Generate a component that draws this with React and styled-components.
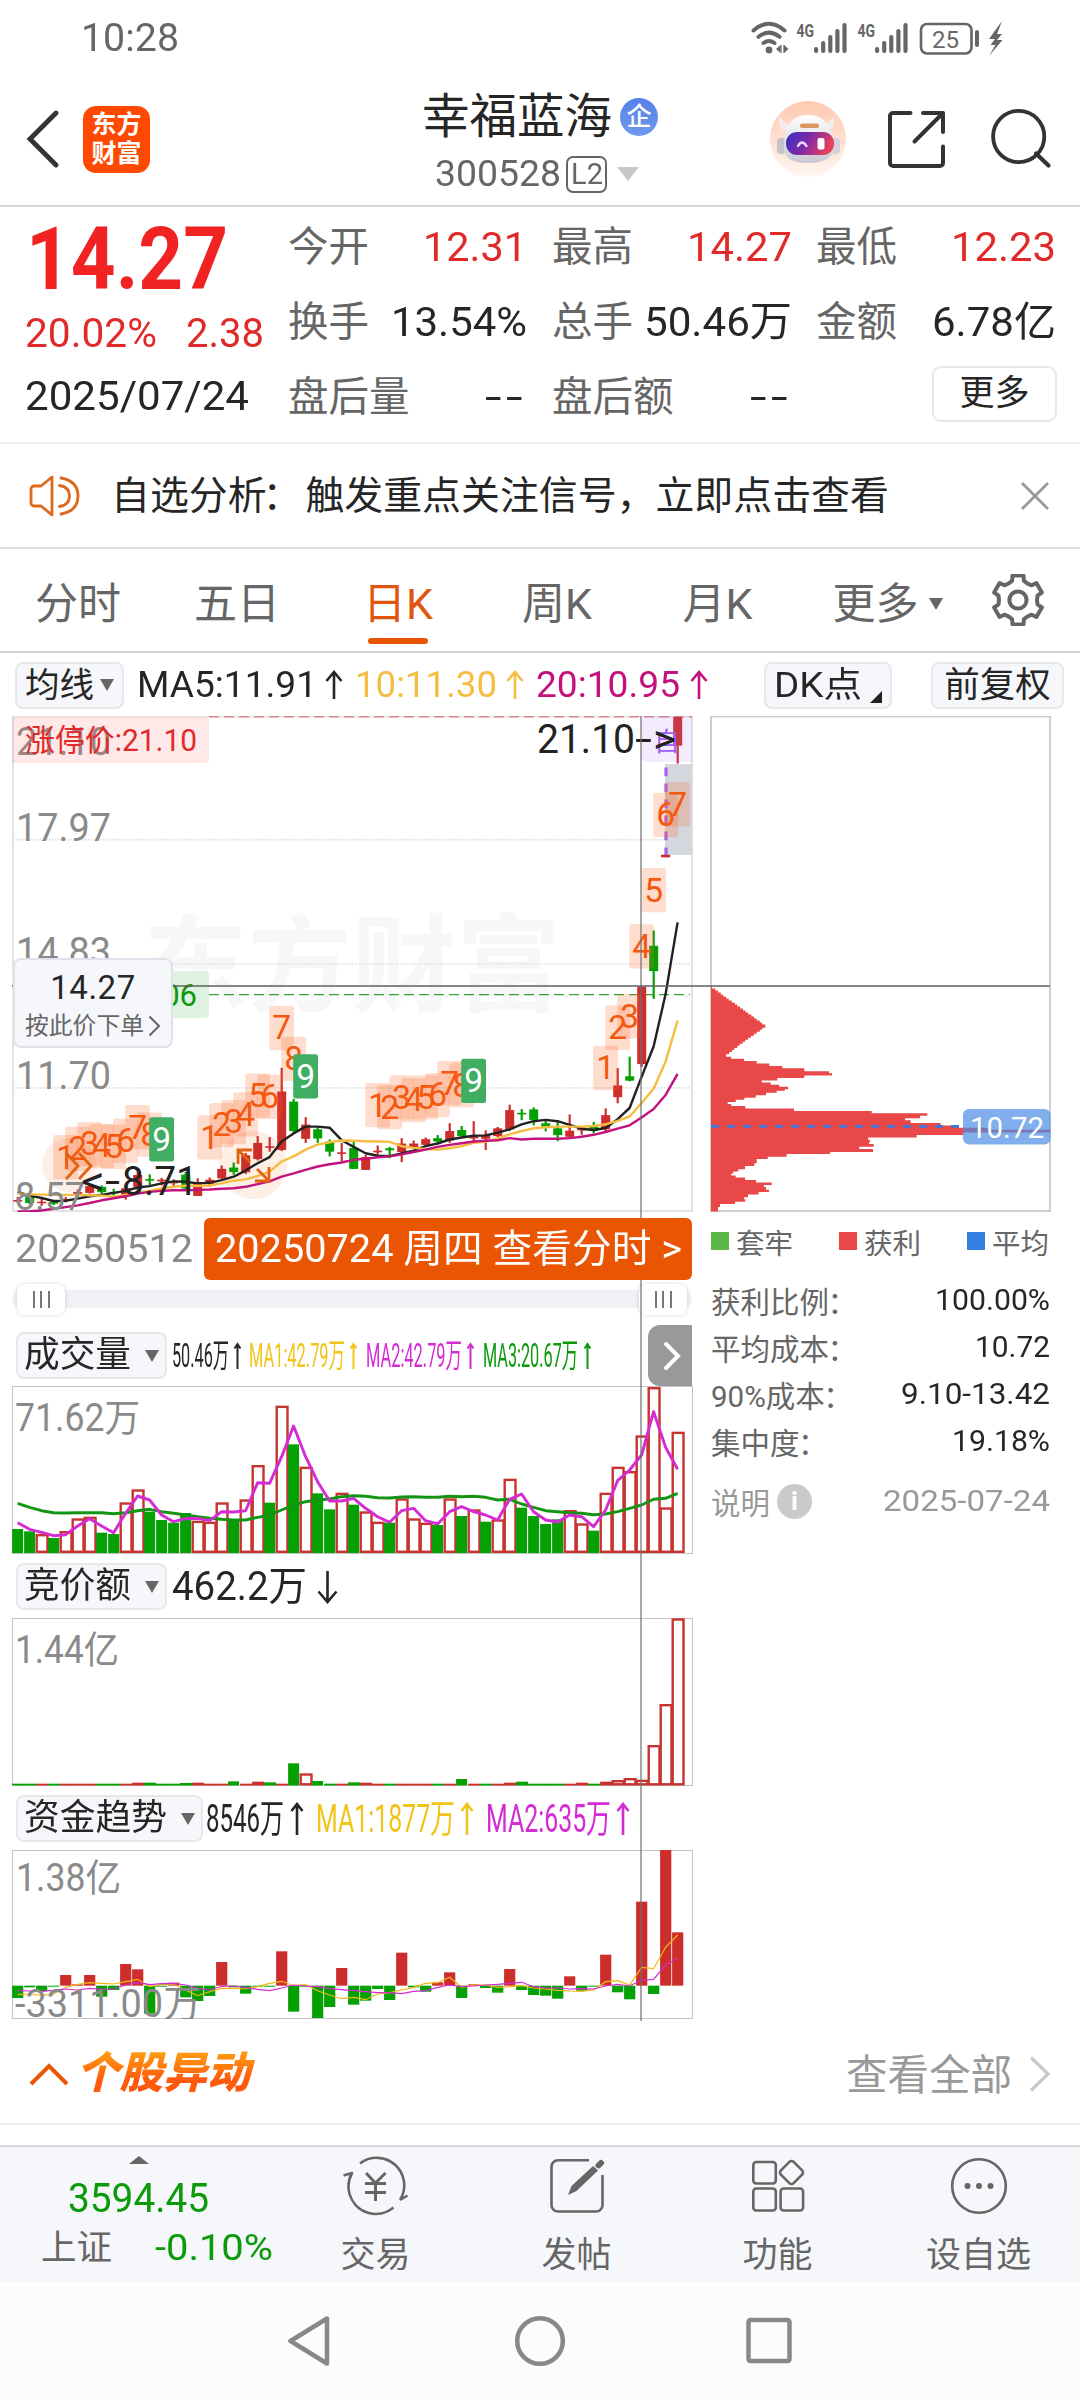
import React, { useLayoutEffect, useRef, useState } from 'react';
import styled, { createGlobalStyle } from 'styled-components';

const FONT = 'Roboto, "Noto Sans CJK SC", sans-serif';

const C = {
  ink: '#262626',
  grey: '#666666',
  light: '#999999',
  red: '#e02a2a',
  green: '#0a9a0a',
  orange: '#ea5504',
  yellow: '#f5bd42',
  gold: '#f0c419',
  magenta: '#c4127d',
  violet: '#d42bd4',
  up: '#cd2e2c',
  down: '#04a004',
};

const Global = createGlobalStyle`
  * { box-sizing: border-box; }
  body { margin: 0; background: #fff; font-family: ${FONT}; color: ${C.ink}; }
  svg { display: block; flex: none; }
  text { font-family: ${FONT}; }
`;

/* ---------- shared pieces ---------- */

const FitBox = styled.span`
  display: inline-block;
  flex: none;
  width: ${(p) => p.$w}px;
  white-space: nowrap;
`;
const FitInner = styled.span`
  display: inline-block;
  transform-origin: left center;
`;

function Fit({ w, children }) {
  const ref = useRef(null);
  const [scale, setScale] = useState(1);
  useLayoutEffect(() => {
    const natural = ref.current.getBoundingClientRect().width / scale;
    if (natural) setScale(w / natural);
  }, [w, children]);
  return (
    <FitBox $w={w}>
      <FitInner ref={ref} style={{ transform: `scaleX(${scale})` }}>{children}</FitInner>
    </FitBox>
  );
}

const Page = styled.div`
  width: 1080px;
  height: 2400px;
  display: flex;
  flex-direction: column;
  overflow: hidden;
  background: #fff;
`;

const Label = styled.span`
  display: inline-block;
  flex: none;
  font-size: ${(p) => p.$size || 36}px;
  font-weight: ${(p) => p.$weight || 400};
  color: ${(p) => p.$color || C.ink};
  line-height: ${(p) => p.$lh || 50}px;
  margin-left: ${(p) => p.$ml || 0}px;
  white-space: nowrap;
`;

const Caret = styled.i`
  display: inline-block;
  flex: none;
  border: ${(p) => (p.$w || 14) / 2}px solid transparent;
  border-bottom-width: 0;
  border-top: ${(p) => p.$h || 12}px solid ${(p) => p.$color || C.grey};
  margin-left: ${(p) => p.$ml || 0}px;
`;

const Colon = styled.span`
  margin: 0 ${(p) => p.$by}px 0 ${(p) => -p.$by}px;
`;

const ArrowSvg = styled.svg`
  margin-left: ${(p) => p.$ml}px;
`;
function Arrow({ color, w = 18, h = 30, ml = 6, down }) {
  const d = down
    ? `M${w / 2} 1V${h - 2}M1.5 ${h - w / 2 - 2}L${w / 2} ${h - 2}L${w - 1.5} ${h - w / 2 - 2}`
    : `M${w / 2} ${h - 1}V2M1.5 ${w / 2 + 2}L${w / 2} 2L${w - 1.5} ${w / 2 + 2}`;
  return (
    <ArrowSvg width={w} height={h} $ml={ml} viewBox={`0 0 ${w} ${h}`}>
      <path d={d} fill="none" stroke={color} strokeWidth={w < 12 ? 2 : 2.6} />
    </ArrowSvg>
  );
}

/* ---------- status bar ---------- */

const StatusBar = styled.div`
  height: 72px;
  flex: none;
  display: flex;
  align-items: center;
  justify-content: space-between;
  padding: 4px 76px 0 81px;
`;

function StatusIcons() {
  const bars = (x) =>
    [0, 1, 2, 3, 4].map((i) => (
      <rect key={i} x={x + i * 7.1} y={27 - i * 6} width="4.2" height={6 + i * 6} rx="2" fill={C.grey} />
    ));
  return (
    <svg width="254" height="36" viewBox="750 18 254 36">
      <g fill="none" stroke={C.grey} strokeWidth="4" strokeLinecap="round">
        <path d="M753.500 28.500Q769 15 784.500 28.500" />
        <path d="M758.500 34.800Q769 26.500 779.500 34.800" />
        <path d="M763.500 41Q769 37 774.500 41" />
      </g>
      <circle cx="769" cy="48" r="3.400" fill={C.grey} />
      <path d="M776 47l4.500-4v8zM788.500 47l-4.500-4v8z" fill={C.grey} />
      <path d="M781 43v8M784 43v8" stroke={C.grey} strokeWidth="1.200" />
      <text x="796.500" y="34.500" fontSize="19" fontWeight="700" fill={C.grey} textLength="17.500" lengthAdjust="spacingAndGlyphs">4G</text>
      <g transform="translate(0 18)">{bars(814)}</g>
      <text x="857.500" y="34.500" fontSize="19" fontWeight="700" fill={C.grey} textLength="17.500" lengthAdjust="spacingAndGlyphs">4G</text>
      <g transform="translate(0 18)">{bars(875)}</g>
      <rect x="921" y="22" width="50.500" height="29.500" rx="6" fill="none" stroke={C.grey} strokeWidth="2.600" />
      <text x="945.500" y="45.500" fontSize="24" textAnchor="middle" fill={C.grey}>25</text>
      <rect x="975" y="28" width="4" height="17" rx="2" fill={C.grey} />
      <path d="M1002 19L989 37h6l-4.500 6h5L989 54l13.500-16h-5.500l5-6h-5z" fill={C.grey} />
    </svg>
  );
}

/* ---------- title bar ---------- */

const TitleBar = styled.header`
  height: 135px;
  flex: none;
  display: grid;
  grid-template-columns: 360px 360px 360px;
  border-bottom: 2px solid #d8d8d8;
`;
const TitleLeft = styled.div`
  display: flex;
  align-items: center;
  padding: 1px 0 0 26px;
`;
const Logo = styled.div`
  width: 67px;
  height: 67px;
  margin-left: 23px;
  border-radius: 13px;
  background: #ff4800;
  color: #fff;
  display: flex;
  flex-direction: column;
  align-items: center;
  justify-content: center;
  font-size: 25px;
  font-weight: 700;
  line-height: 29px;
`;
const TitleMid = styled.div`
  display: flex;
  flex-direction: column;
  padding-top: 13px;
`;
const NameRow = styled.div`
  height: 64px;
  display: flex;
  align-items: center;
  padding-left: 62px;
`;
const CodeRow = styled.div`
  height: 50px;
  display: flex;
  align-items: center;
  padding-left: 75px;
`;
const CorpBadge = styled.span`
  width: 38px;
  height: 38px;
  margin-left: 8px;
  border-radius: 50%;
  background: linear-gradient(#5680ea, #6e9bec);
  color: #fff;
  font-size: 25px;
  font-weight: 500;
  line-height: 38px;
  text-align: center;
`;
const LevelBadge = styled.span`
  width: 41px;
  height: 37px;
  margin-left: 5px;
  border: 2px solid ${C.grey};
  border-radius: 7px;
  font-size: 29px;
  line-height: 33px;
  color: ${C.grey};
  display: flex;
  justify-content: center;
`;
const TitleRight = styled.div`
  display: flex;
  align-items: center;
  padding: 1px 0 0 50px;
`;

function Robot() {
  return (
    <svg width="76" height="76" viewBox="0 0 76 76">
      <defs>
        <linearGradient id="halo" x1="0" y1="0" x2="0" y2="1">
          <stop offset="0" stopColor="#ffc9b0" />
          <stop offset="1" stopColor="#fff6f1" />
        </linearGradient>
        <linearGradient id="visor" x1="0" y1="0" x2="1" y2="0.300">
          <stop offset="0" stopColor="#3a2fc0" />
          <stop offset="0.500" stopColor="#7a2aa8" />
          <stop offset="1" stopColor="#e5405c" />
        </linearGradient>
        <linearGradient id="shell" x1="0" y1="0" x2="0" y2="1">
          <stop offset="0" stopColor="#ffffff" />
          <stop offset="1" stopColor="#c9c9d2" />
        </linearGradient>
      </defs>
      <circle cx="38" cy="38" r="38" fill="url(#halo)" />
      <path d="M10 15q-4 10 6 16l4-7q-8-2-10-9zM63 15q4 10-6 16l-4-7q8-2 10-9z" fill="#f3eeee" />
      <rect x="7" y="37" width="9" height="16" rx="4" fill="#c4c2cb" />
      <rect x="61" y="37" width="9" height="16" rx="4" fill="#d2d0d8" />
      <path d="M14 45Q14 14 38 14T64 45Q64 62 38 62T14 45z" fill="url(#shell)" />
      <rect x="30" y="22.500" width="19" height="4.500" rx="2" fill="#dc9460" />
      <rect x="16" y="31" width="48" height="23" rx="11" fill="url(#visor)" />
      <path d="M28 45q4-7 8.500 0" fill="none" stroke="#e9d6ff" strokeWidth="2.400" strokeLinecap="round" />
      <rect x="47.500" y="37" width="7" height="11.500" rx="2" fill="#fff" />
    </svg>
  );
}
const Gap = styled.span`
  flex: none;
  width: ${(p) => p.$w}px;
`;

/* ---------- quote ---------- */

const Quote = styled.section`
  height: 237px;
  flex: none;
  display: grid;
  grid-template-columns: 263px 236px 237px 238px;
  column-gap: 0;
  padding: 3px 0 0 25px;
  border-bottom: 2px solid #ececec;
`;
const PriceCol = styled.div`
  display: flex;
  flex-direction: column;
`;
const Price = styled.div`
  height: 99px;
  padding-left: 1px;
  font-size: 87px;
  font-weight: 700;
  line-height: 99px;
  color: #f02222;
`;
const ChangeRow = styled.div`
  height: 49px;
  display: flex;
  align-items: center;
  gap: 29px;
  font-size: 41px;
  line-height: 49px;
  color: ${C.red};
`;
const DateRow = styled.div`
  height: 76px;
  font-size: 41px;
  line-height: 76px;
`;
const MetricCol = styled.div`
  display: flex;
  flex-direction: column;
  width: ${(p) => p.$w}px;
  margin-left: ${(p) => p.$ml || 0}px;
`;
const Metric = styled.div`
  height: 75px;
  display: flex;
  align-items: center;
  justify-content: space-between;
  font-size: 41px;
  line-height: 75px;
  color: ${(p) => (p.$red ? C.red : C.ink)};
`;
const MetricName = styled.span`
  font-size: 40.5px;
  color: ${C.grey};
`;
const Dashes = styled.span`
  letter-spacing: 3px;
`;
const MoreBtn = styled.div`
  width: 125px;
  height: 56px;
  margin: 6px 0 0 116px;
  border: 2px solid #e8e8ea;
  border-radius: 9px;
  font-size: 35px;
  line-height: 52px;
  text-align: center;
`;

/* ---------- notice ---------- */

const Notice = styled.section`
  height: 105px;
  flex: none;
  display: flex;
  align-items: center;
  padding: 0 30px 0 28px;
  border-bottom: 2px solid #dcdcdc;
`;
const NoticeText = styled.span`
  flex: 1;
  margin-left: 29px;
  padding-top: 1px;
  font-size: 38.9px;
  line-height: 60px;
  white-space: nowrap;
`;

/* ---------- tabs ---------- */

const Tabs = styled.nav`
  height: 104px;
  flex: none;
  display: flex;
  border-bottom: 2px solid #d4d4d4;
`;
const Tab = styled.div`
  width: ${(p) => p.$w}px;
  display: flex;
  flex-direction: column;
  align-items: center;
  padding-top: 25px;
  font-size: 43px;
  line-height: 60px;
  color: ${(p) => (p.$on ? '#e0560f' : C.grey)};
`;
const TabBar = styled.i`
  width: 60px;
  height: 6px;
  margin-top: 4px;
  border-radius: 3px;
  background: ${C.orange};
`;
const TabMore = styled.div`
  display: flex;
  align-items: center;
`;

function Gear() {
  const pts = [];
  for (let i = 0; i < 6; i += 1) {
    const base = (i * 60 - 90) * (Math.PI / 180);
    [[-0.52, 19], [-0.3, 20], [-0.22, 25], [0.22, 25], [0.3, 20]].forEach(([a, r]) => {
      pts.push(`${(26 + Math.cos(base + a) * r).toFixed(1)},${(26 + Math.sin(base + a) * r).toFixed(1)}`);
    });
  }
  return (
    <svg width="52" height="52" viewBox="0 0 52 52">
      <polygon points={pts.join(' ')} fill="none" stroke={C.grey} strokeWidth="4" strokeLinejoin="round" />
      <circle cx="26" cy="26" r="8.600" fill="none" stroke={C.grey} strokeWidth="4" />
    </svg>
  );
}

/* ---------- toolbar over the chart ---------- */

const Toolbar = styled.div`
  height: 63px;
  flex: none;
  display: flex;
  align-items: center;
  padding: 1px 0 0 15px;
`;
const Pill = styled.div`
  flex: none;
  width: ${(p) => p.$w}px;
  height: 47px;
  margin-left: ${(p) => p.$ml || 0}px;
  border: 2px solid #e6e8ec;
  border-radius: 8px;
  background: #f6f7fb;
  display: flex;
  align-items: center;
  justify-content: center;
  font-size: ${(p) => p.$size || 34.5}px;
  line-height: 43px;
  white-space: nowrap;
`;
const Corner = styled.i`
  align-self: flex-end;
  margin: 0 0 4px 8px;
  border-left: 12px solid transparent;
  border-bottom: 12px solid #222;
`;

/* ---------- charts ---------- */

const ChartArea = styled.section`
  position: relative;
  height: 1305px;
  flex: none;
  display: flex;
  align-items: flex-start;
  padding-left: 12px;
`;
const LeftCol = styled.div`
  width: 680px;
  display: flex;
  flex-direction: column;
`;
const RightCol = styled.div`
  width: 340px;
  margin-left: 18px;
  display: flex;
  flex-direction: column;
`;
const CrossV = styled.i`
  position: absolute;
  left: 640px;
  top: 0;
  width: 2px;
  height: 1305px;
  background: rgba(110, 110, 110, 0.6);
`;
const CrossH = styled.i`
  position: absolute;
  left: 12px;
  top: 269px;
  width: 1038px;
  height: 2px;
  background: rgba(95, 95, 95, 0.75);
`;
const OrderTip = styled.div`
  position: absolute;
  left: 13px;
  top: 242px;
  width: 160px;
  height: 90px;
  border: 2px solid #dfe2ea;
  border-radius: 8px;
  background: #f6f7fb;
  display: flex;
  flex-direction: column;
  align-items: center;
  padding-top: 7px;
`;
const TipPrice = styled.div`
  font-size: 33px;
  line-height: 42px;
  letter-spacing: 0.5px;
`;
const TipRow = styled.div`
  display: flex;
  align-items: center;
  gap: 4px;
  font-size: 23.8px;
  line-height: 34px;
  color: ${C.grey};
`;

const cx = (i) => 17.6 + 12 * i;
const ky = (p) => 700 + p / 2.958;

// [colour, body top, body bottom, wick top, wick bottom]
const CANDLES = [
  ['r', 1479, 1483, 1470, 1488], ['g', 1468, 1488, 1464, 1492], ['r', 1484, 1488, 1476, 1496], ['g', 1484, 1490, 1480, 1494],
  ['r', 1476, 1480, 1470, 1486], ['r', 1455, 1461, 1448, 1470], ['r', 1438, 1458, 1432, 1460], ['g', 1440, 1456, 1436, 1462],
  ['g', 1455, 1459, 1446, 1466], ['r', 1444, 1466, 1430, 1478], ['r', 1405, 1440, 1388, 1460], ['g', 1417, 1421, 1403, 1435],
  ['r', 1419, 1424, 1414, 1436], ['r', 1425, 1429, 1418, 1440], ['g', 1404, 1445, 1396, 1450], ['r', 1428, 1467, 1415, 1467],
  ['r', 1419, 1432, 1412, 1440], ['r', 1387, 1415, 1377, 1418], ['g', 1383, 1396, 1368, 1404], ['r', 1347, 1397, 1340, 1402],
  ['r', 1310, 1358, 1290, 1362], ['r', 1320, 1324, 1293, 1336], ['r', 1158, 1331, 1088, 1334], ['g', 1188, 1275, 1180, 1282],
  ['r', 1256, 1298, 1234, 1310], ['g', 1270, 1297, 1262, 1310], ['g', 1306, 1336, 1300, 1350], ['r', 1338, 1342, 1310, 1365],
  ['g', 1325, 1387, 1305, 1387], ['r', 1352, 1390, 1345, 1390], ['r', 1333, 1338, 1318, 1345], ['g', 1326, 1332, 1322, 1355],
  ['r', 1312, 1337, 1296, 1367], ['r', 1312, 1322, 1303, 1325], ['r', 1299, 1316, 1294, 1318], ['g', 1296, 1306, 1287, 1310],
  ['r', 1275, 1303, 1252, 1310], ['g', 1272, 1290, 1260, 1292], ['r', 1290, 1297, 1246, 1307], ['r', 1287, 1298, 1273, 1331],
  ['r', 1267, 1290, 1263, 1293], ['r', 1213, 1270, 1197, 1275], ['g', 1221, 1225, 1210, 1243], ['g', 1211, 1242, 1205, 1258],
  ['g', 1252, 1262, 1245, 1276], ['g', 1267, 1287, 1247, 1305], ['r', 1274, 1292, 1226, 1295], ['r', 1265, 1273, 1262, 1286],
  ['g', 1262, 1275, 1248, 1282], ['r', 1228, 1270, 1208, 1280], ['r', 1140, 1175, 1089, 1193], ['g', 1113, 1126, 1055, 1128],
  ['r', 848, 1077, 848, 1085], ['g', 727, 802, 682, 884], ['r', 458, 465, 458, 465], ['r', 50, 135, 50, 188],
];
const MA5 = [1455, 1466, 1473, 1482, 1481, 1475, 1468, 1464, 1458, 1452, 1442, 1438, 1430, 1424, 1425, 1430, 1428, 1420, 1410, 1392, 1370, 1352, 1306, 1282, 1262, 1262, 1265, 1302, 1322, 1341, 1348, 1349, 1341, 1333, 1320, 1312, 1300, 1294, 1289, 1288, 1280, 1270, 1255, 1246, 1242, 1246, 1257, 1268, 1272, 1266, 1240, 1207, 1115, 1025, 870, 658];
const MA10 = [1460, 1462, 1463, 1464, 1464, 1464, 1465, 1466, 1469, 1464, 1458, 1452, 1445, 1440, 1437, 1437, 1436, 1430, 1422, 1418, 1408, 1395, 1365, 1350, 1330, 1315, 1308, 1303, 1304, 1305, 1306, 1307, 1320, 1325, 1328, 1330, 1326, 1320, 1310, 1307, 1297, 1285, 1275, 1267, 1264, 1262, 1262, 1262, 1260, 1255, 1245, 1232, 1192, 1150, 1070, 948];
const MA20 = [1513, 1512, 1510, 1505, 1500, 1495, 1488, 1480, 1474, 1468, 1460, 1455, 1452, 1450, 1450, 1449, 1448, 1446, 1444, 1440, 1432, 1424, 1410, 1400, 1390, 1380, 1373, 1368, 1360, 1357, 1353, 1350, 1344, 1337, 1330, 1322, 1316, 1311, 1306, 1304, 1302, 1296, 1300, 1298, 1298, 1298, 1296, 1292, 1286, 1278, 1268, 1258, 1235, 1210, 1168, 1106];

const COUNTS = [
  { start: 4, tops: [1287, 1262, 1248, 1254, 1256, 1238, 1198, 1220, 1234] },
  { start: 16, tops: [1228, 1192, 1183, 1160, 1105, 1108, 905, 996, 1048] },
  { start: 30, tops: [1133, 1139, 1110, 1118, 1110, 1103, 1068, 1074, 1061] },
  { start: 49, tops: [1023, 904, 870, 663, 497, 274, 243] },
];

const line = (vals, fy) => vals.map((v, i) => `${cx(i).toFixed(1)},${fy(v).toFixed(1)}`).join(' ');

function CountTag({ i, top, n }) {
  const y = ky(top);
  const last = n === 9;
  return (
    <g>
      <rect x={cx(i) - 12.4} y={y} width="24.800" height="44.300" rx="2.500" fill={last ? '#3fae62' : 'rgba(252,98,30,0.22)'} />
      <text x={cx(i)} y={y + 33.5} fontSize="33.500" textAnchor="middle" fill={last ? '#fff' : '#f4580e'}>{n}</text>
    </g>
  );
}

function KChart() {
  const grey = { fill: '#8a8a8a', fontSize: 39, lengthAdjust: 'spacingAndGlyphs' };
  return (
    <svg width="681" height="496" viewBox="12 716 681 496">
      <rect x="13" y="716.500" width="679" height="494.500" fill="none" stroke="#e2e2e2" strokeWidth="2" />
      <text x="143" y="1003" fontSize="106" fontWeight="700" fill="#f7f7f7" textLength="418" lengthAdjust="spacingAndGlyphs">东方财富</text>
      {[839.6, 963.8, 1087.9].map((y) => (
        <path key={y} d={`M13 ${y}H691`} stroke="#dedede" strokeWidth="1.600" strokeDasharray="1.500 1.500" />
      ))}
      <path d="M209 716.500H692" stroke="#d88a8a" strokeWidth="1.800" strokeDasharray="10 5" />
      <path d="M209 994.600H690" stroke="#35a035" strokeWidth="1.400" strokeDasharray="10 5" />
      <path d="M12 971H205a4 4 0 0 1 4 4v39a4 4 0 0 1-4 4H12z" fill="#dff2df" />
      <text x="197" y="1006" fontSize="31" textAnchor="end" fill={C.green}>06</text>

      <circle cx="69" cy="1165" r="27" fill="#fdeee6" />
      <circle cx="253" cy="1165" r="34" fill="#fdeee6" />

      {CANDLES.map(([k, bt, bb, wt, wb], i) => (
        <g key={i} fill={k === 'r' ? C.up : C.down}>
          <rect x={cx(i) - 1} y={ky(wt)} width="2.200" height={(wb - wt) / 2.958} />
          <rect x={cx(i) - 4.4} y={ky(bt)} width="9" height={Math.max(1.6, (bb - bt) / 2.958)} />
        </g>
      ))}
      <g fill="none" strokeWidth="2.400" strokeLinejoin="round">
        <polyline points={line(MA5, ky)} stroke="#222" />
        <polyline points={line(MA10, ky)} stroke={C.yellow} />
        <polyline points={line(MA20, ky)} stroke={C.magenta} />
      </g>

      <path d="M647 716H692V762H647a6 6 0 0 1-6-6V722a6 6 0 0 1 6-6z" fill="rgba(170,110,245,0.14)" />
      <rect x="665" y="764" width="27" height="91" fill="#d4d8de" />
      <path d="M666 767.500V857" stroke="#a763ee" strokeWidth="3.200" strokeDasharray="8.700 7.300" />
      <rect x="661" y="854.800" width="9" height="2.400" fill={C.up} />

      {COUNTS.map((g) => g.tops.map((t, k) => <CountTag key={`${g.start}-${k}`} i={g.start + k} top={t} n={k + 1} />))}

      <g fill="none" stroke="#e2620f" strokeWidth="2.800">
        <path d="M66 1153L78 1166L66 1179M79 1153L91 1166L79 1179" />
        <path d="M238 1164V1150H252M239 1151L250 1162M255 1181H269V1167M268 1180L257 1169" />
      </g>

      <text x="16" y="755" textLength="95" {...grey}>21.10</text>
      <path d="M12 717H205a4 4 0 0 1 4 4v38a4 4 0 0 1-4 4H12z" fill="rgba(255,110,110,0.16)" />
      <text x="25" y="751" fontSize="30.500" fill={C.red} textLength="172" lengthAdjust="spacingAndGlyphs">涨停价:21.10</text>
      <text x="16" y="841" textLength="95" {...grey}>17.97</text>
      <text x="16" y="965" textLength="95" {...grey}>14.83</text>
      <text x="16" y="1089" textLength="95" {...grey}>11.70</text>
      <text x="15" y="1209.500" textLength="70" {...grey}>8.57</text>
      <text x="81" y="1194.500" fontSize="40" fill="#222" textLength="24" lengthAdjust="spacingAndGlyphs">&lt;</text>
      <text x="105" y="1194.500" fontSize="40" fill="#222" textLength="15" lengthAdjust="spacingAndGlyphs">-</text>
      <text x="122" y="1194.500" fontSize="40" fill="#222" textLength="76" lengthAdjust="spacingAndGlyphs">8.71</text>
      <text x="654" y="751" fontSize="26" fill="#a35cf0">自</text>
      <text x="537" y="753" fontSize="40" fill="#222" textLength="98" lengthAdjust="spacingAndGlyphs">21.10</text>
      <text x="635" y="753" fontSize="40" fill="#222" textLength="17" lengthAdjust="spacingAndGlyphs">-</text>
      <text x="653" y="753" fontSize="40" fill="#222" textLength="23" lengthAdjust="spacingAndGlyphs">&gt;</text>
    </svg>
  );
}

const PROFILE = [
  [215, 66], [220, 76], [225, 84], [230, 92], [235, 99], [240, 108], [245, 116], [250, 125], [255, 134], [260, 142], [265, 150],
  [270, 159], [275, 167], [280, 175], [285, 184], [290, 192], [295, 200], [300, 209], [305, 216], [310, 226],
  [318, 217], [323, 209], [328, 200], [333, 192], [338, 183], [343, 174], [348, 166], [353, 158], [358, 149], [363, 142], [368, 133],
  [373, 126], [378, 118], [384, 108], [390, 124], [395, 162],
  [401, 200], [407, 238], [413, 277], [419, 343], [426, 417], [431, 426], [437, 343], [443, 262], [449, 215], [454, 242], [460, 268],
  [465, 294], [471, 284], [475, 260], [480, 228], [486, 197], [492, 163], [497, 137], [503, 113], [508, 124], [513, 166], [519, 312],
  [525, 545], [531, 712], [537, 690], [543, 645], [548, 662], [555, 752], [561, 806], [567, 900], [572, 1081], [579, 820], [585, 680],
  [591, 535], [597, 540], [603, 537], [607, 551], [614, 508], [620, 549], [627, 420], [632, 290], [639, 233], [645, 200], [655, 193],
  [662, 165], [670, 145], [676, 130], [681, 124], [686, 137], [691, 165], [697, 198], [703, 245], [709, 222], [714, 228], [721, 237],
  [727, 206], [733, 174], [740, 162], [745, 166], [751, 135], [757, 90], [764, 84], [775, 84],
];

function CostChart() {
  const fx = (p) => 690 + p / 3;
  const fy = (p) => 900 + p / 2.489;
  let d = `M711 ${fy(215)}`;
  PROFILE.forEach(([y, x], k) => {
    const next = PROFILE[k + 1] ? PROFILE[k + 1][0] : y;
    d += `H${fx(x).toFixed(1)}V${fy(next).toFixed(1)}`;
  });
  d += 'H711Z';
  return (
    <svg width="341" height="496" viewBox="710 716 341 496">
      <rect x="711" y="716.500" width="339" height="494.500" fill="none" stroke="#c9c9c9" strokeWidth="1.800" />
      <path d={d} fill="#e84848" />
      <path d="M711 1126.300H959" stroke="#3d78d8" strokeWidth="2.800" strokeDasharray="8 8" />
      <rect x="963" y="1109" width="87.500" height="35.500" rx="6" fill="rgba(75,140,228,0.7)" />
      <text x="1007" y="1137.500" fontSize="30" fill="#fff" textAnchor="middle" textLength="74" lengthAdjust="spacingAndGlyphs">10.72</text>
    </svg>
  );
}

const DateStrip = styled.div`
  position: relative;
  z-index: 1;
  height: 68px;
  display: flex;
  align-items: center;
  padding: 5px 0 0 3px;
`;
const DateButton = styled.div`
  width: 488px;
  height: 62px;
  margin-left: auto;
  padding: 0 0 0 11px;
  border-radius: 6px;
  background: ${C.orange};
  color: #fff;
  font-size: 38.5px;
  line-height: 62px;
`;
const SliderRow = styled.div`
  height: 44px;
  display: flex;
  align-items: flex-start;
  padding-top: 10px;
`;
const Track = styled.div`
  width: 680px;
  height: 18px;
  border-radius: 9px;
  background: #f0f1f4;
  display: flex;
  align-items: center;
  justify-content: space-between;
  padding: 0 5px;
`;
const Handle = styled.div`
  width: 48px;
  height: 31px;
  border-radius: 8px;
  background: #fff;
  box-shadow: 0 0 4px rgba(0, 0, 0, 0.16);
  display: flex;
  align-items: center;
  justify-content: center;
  gap: 5.500px;
  i { width: 2px; height: 17px; background: #777; }
`;
const SubHead = styled.div`
  height: ${(p) => p.$h || 64}px;
  display: flex;
  align-items: center;
  padding: 1px 0 0 4px;
`;
const NextBtn = styled.div`
  width: 44px;
  height: 61px;
  margin-left: auto;
  padding-left: 4px;
  border-radius: 12px 0 0 12px;
  background: #999;
  display: flex;
  align-items: center;
  justify-content: center;
`;
const Legend = styled.div`
  height: 58px;
  display: flex;
  align-items: center;
  justify-content: space-between;
  padding: 0 1px 0 1px;
  font-size: 28.5px;
  color: ${C.grey};
  span { display: flex; align-items: center; gap: 7px; }
`;
const Swatch = styled.i`
  width: 18px;
  height: 18px;
  background: ${(p) => p.$c};
`;
const Stats = styled.div`
  padding: 6px 0 0 1px;
`;
const StatRow = styled.div`
  height: 47px;
  display: flex;
  align-items: center;
  justify-content: space-between;
  font-size: 29.5px;
  color: ${C.grey};
  b { font-weight: 400; color: ${C.ink}; }
`;
const NoteRow = styled.div`
  height: 60px;
  margin-top: 7px;
  display: flex;
  align-items: center;
  justify-content: space-between;
  font-size: 29.5px;
  padding-left: 1px;
  color: ${C.light};
  span { display: flex; align-items: center; }
`;
const Info = styled.i`
  width: 35px;
  height: 35px;
  margin-left: 7px;
  border-radius: 50%;
  background: #cacaca;
  color: #fff;
  font-style: normal;
  font-weight: 700;
  font-size: 26px;
  line-height: 35px;
  text-align: center;
`;

const COL = 'ggrgrrrggrrggggrrrgrrgrgrggrgrrgrrrgrgrgrrggggrrgrrrrrrr';
const VOL = [957, 964, 972, 984, 963, 925, 920, 968, 972, 877, 838, 905, 930, 938, 909, 932, 935, 877, 928, 868, 765, 878, 587, 703, 770, 850, 898, 848, 884, 904, 935, 938, 865, 925, 938, 945, 865, 918, 898, 935, 928, 806, 893, 918, 942, 928, 900, 940, 962, 848, 770, 783, 676, 531, 892, 665];
const VMA2 = [938, 958, 967, 977, 974, 948, 926, 948, 968, 910, 858, 870, 915, 935, 926, 925, 932, 905, 906, 902, 818, 820, 740, 648, 740, 815, 873, 873, 865, 895, 920, 937, 902, 895, 932, 942, 905, 890, 905, 915, 930, 868, 852, 905, 930, 936, 915, 920, 950, 900, 812, 780, 735, 605, 712, 778];
const VMA3 = [880, 892, 902, 908, 909, 908, 908, 908, 911, 908, 902, 898, 905, 910, 915, 920, 925, 928, 930, 930, 922, 915, 900, 885, 875, 870, 867, 860, 857, 859, 863, 864, 861, 860, 862, 862, 859, 860, 859, 862, 870, 868, 882, 892, 902, 905, 908, 910, 914, 912, 905, 895, 885, 868, 865, 850];

function Bar({ i, up, top, bottom }) {
  const h = bottom - top;
  if (!up || h < 4) {
    return <rect x={cx(i) - 5.5} y={top} width={h < 4 ? 12 : 11} height={h} fill={up ? C.up : C.down} />;
  }
  return <rect x={cx(i) - 4.9} y={top + 1.2} width="10.800" height={h - 2.4} fill="#fff" stroke="#c63430" strokeWidth="2.400" />;
}

function VolumeChart() {
  const fy = (p) => 1210 + p / 3;
  return (
    <svg width="681" height="168" viewBox="12 1386 681 168">
      <rect x="12.500" y="1386.500" width="680" height="167" fill="none" stroke="#c4c4c4" />
      <text x="15" y="1430.500" fontSize="38" fill="#8a8a8a" textLength="125" lengthAdjust="spacingAndGlyphs">71.62万</text>
      {VOL.map((v, i) => <Bar key={i} i={i} up={COL[i] === 'r'} top={fy(v)} bottom={1553} />)}
      <g fill="none" strokeWidth="2.900" strokeLinejoin="round">
        <polyline points={line(VMA3, fy)} stroke="#139513" />
        <polyline points={line(VMA2, fy)} stroke={C.violet} />
      </g>
    </svg>
  );
}

const BID = { 10: 698, 11: 698, 14: 699, 15: 698, 18: 694, 20: 695, 21: 697, 23: 640, 24: 670, 25: 693, 28: 697, 29: 698, 37: 687, 41: 698, 42: 695, 47: 698, 49: 695, 50: 690, 51: 684, 52: 689, 53: 585, 54: 462, 55: 205 };

function BidChart() {
  const fy = (p) => 1550 + p / 3;
  return (
    <svg width="681" height="168" viewBox="12 1618 681 168">
      <rect x="12.500" y="1618.500" width="680" height="167" fill="none" stroke="#c4c4c4" />
      <text x="15" y="1662.500" fontSize="38" fill="#8a8a8a" textLength="104" lengthAdjust="spacingAndGlyphs">1.44亿</text>
      {VOL.map((v, i) => <Bar key={i} i={i} up={COL[i] === 'r'} top={fy(BID[i] || 701)} bottom={1785.5} />)}
    </svg>
  );
}

const FLOW = [624, 592, 603, 590, 555, 583, 555, 620, 600, 522, 538, 671, 590, 578, 622, 633, 618, 516, 592, 611, 590, 590, 484, 665, 589, 684, 651, 534, 644, 632, 597, 630, 488, 592, 605, 577, 547, 624, 583, 594, 608, 537, 600, 615, 617, 626, 559, 602, 590, 494, 607, 628, 335, 612, 180, 427];
const FMA1 = [614, 612, 616, 612, 592, 583, 578, 580, 582, 575, 568, 590, 583, 583, 600, 617, 605, 595, 595, 597, 590, 580, 574, 587, 584, 602, 615, 626, 622, 629, 612, 608, 600, 592, 580, 578, 562, 592, 585, 585, 592, 590, 587, 594, 597, 601, 603, 604, 600, 575, 572, 585, 532, 536, 472, 435];
const FMA2 = [601, 603, 604, 601, 597, 600, 595, 598, 597, 585, 577, 584, 581, 580, 585, 595, 600, 589, 588, 592, 598, 602, 594, 585, 588, 590, 596, 599, 602, 605, 608, 608, 611, 604, 602, 592, 585, 590, 588, 585, 583, 580, 577, 590, 594, 594, 597, 596, 597, 588, 583, 588, 570, 568, 525, 505];

function FlowChart() {
  const fy = (p) => 1790 + p / 3;
  const zero = fy(587);
  return (
    <svg width="681" height="169" viewBox="12 1850 681 169">
      <rect x="12.500" y="1850.500" width="680" height="168" fill="none" stroke="#c4c4c4" />
      {FLOW.map((v, i) => (
        <rect key={i} x={cx(i) - 5.5} y={Math.min(fy(v), zero)} width="11.200" height={Math.max(1, Math.abs(fy(v) - zero))} fill={v < 587 ? C.up : C.down} />
      ))}
      <g fill="none" strokeWidth="1.200">
        <polyline points={line(FMA1, fy)} stroke="#f0b90f" />
        <polyline points={line(FMA2, fy)} stroke={C.violet} />
      </g>
      <text x="16" y="1890.500" fontSize="38" fill="#8a8a8a" textLength="105" lengthAdjust="spacingAndGlyphs">1.38亿</text>
      <text x="15" y="2017" fontSize="38" fill="#8a8a8a" textLength="186" lengthAdjust="spacingAndGlyphs">-3311.00万</text>
    </svg>
  );
}

/* ---------- section, dock, navigation ---------- */

const SectionHead = styled.section`
  height: 104px;
  flex: none;
  display: flex;
  align-items: center;
  padding: 3px 29px 0 29px;
  border-bottom: 2px solid #ededed;
`;
const SectionTitle = styled.h2`
  flex: 1;
  margin: 0 0 0 7px;
  font-size: 43.5px;
  font-weight: 900;
  font-style: italic;
  line-height: 60px;
  background: linear-gradient(#ff9a10 15%, #ff5a0c 60%);
  background-clip: text;
  -webkit-background-clip: text;
  color: transparent;
`;
const SeeAll = styled.span`
  padding-top: 4px;
  margin: 0 17px 0 0;
  font-size: 41.5px;
  line-height: 50px;
  color: ${C.light};
`;
const Dock = styled.section`
  height: 137px;
  flex: none;
  margin-top: 20px;
  display: flex;
  border-top: 2px solid #d5d7de;
  background: #f6f7fa;
`;
const IndexCell = styled.div`
  width: 275px;
  display: flex;
  flex-direction: column;
  align-items: center;
  padding: 9px 0 0 2px;
`;
const UpMark = styled.i`
  border: 10px solid transparent;
  border-top-width: 0;
  border-bottom: 8px solid ${C.grey};
  margin-bottom: 12px;
`;
const IndexRow = styled.div`
  align-self: stretch;
  display: flex;
  align-items: center;
  padding-left: 39px;
  margin-top: 3px;
`;
const DockItem = styled.div`
  width: 201px;
  display: flex;
  flex-direction: column;
  align-items: center;
  padding-top: 9px;
  font-size: 35px;
  line-height: 48px;
  color: ${C.grey};
  svg { margin-bottom: 16px; }
`;
const NavBar = styled.div`
  flex: 1;
  display: flex;
  align-items: center;
  justify-content: center;
  gap: 179px;
  padding: 0 0 0 1px;
  background: #fcfcfc;
`;

const S = { fill: 'none', stroke: C.grey, strokeWidth: 2.6, strokeLinejoin: 'round' };

function TradeIcon() {
  return (
    <svg width="66" height="60" viewBox="343 2156 66 60" {...S}>
      <path d="M360 2163.500A27.500 27.500 0 0 1 400 2200M343.500 2175.500L352 2173Q346.500 2183 349.500 2194A27.500 27.500 0 0 0 393.500 2207.500M400 2200L407.500 2195.500" />
      <path d="M366 2173L375.500 2183L385.500 2173M365 2183.500H386M365 2192.500H386M375.500 2183V2201" strokeWidth="3" />
    </svg>
  );
}
function PostIcon() {
  return (
    <svg width="60" height="60" viewBox="547 2156 60 60" {...S}>
      <path d="M589 2160.300H558a6.500 6.500 0 0 0-6.500 6.500V2205a6.500 6.500 0 0 0 6.500 6.500H596a6.500 6.500 0 0 0 6.500-6.500V2175" />
      <path d="M568 2195L571.500 2186L593 2166L598 2170.500L576.500 2191Z" fill={C.grey} stroke="none" />
      <path d="M598.500 2165.500L601 2163" strokeWidth="6" strokeLinecap="round" />
    </svg>
  );
}
function GridIcon() {
  return (
    <svg width="60" height="60" viewBox="748 2156 60 60" {...S}>
      <rect x="753.300" y="2162" width="22.500" height="21.500" rx="3" />
      <rect x="753.300" y="2188.500" width="22.500" height="22" rx="3" />
      <rect x="780.600" y="2188.500" width="22.500" height="22" rx="3" />
      <rect x="782.500" y="2163.500" width="18" height="18" rx="3" transform="rotate(45 791.500 2172.500)" />
    </svg>
  );
}
function DotsIcon() {
  return (
    <svg width="60" height="60" viewBox="-30 -30 60 60" {...S}>
      <circle r="26.800" />
      <g fill={C.grey} stroke="none">
        <circle cx="-11.500" r="3" />
        <circle r="3" />
        <circle cx="11.500" r="3" />
      </g>
    </svg>
  );
}

const HandleGrip = () => <Handle><i /><i /><i /></Handle>;

function Stat({ name, value, w }) {
  return (
    <StatRow>
      <span>{name}<Colon $by={1.5}>：</Colon></span>
      <b><Fit w={w}>{value}</Fit></b>
    </StatRow>
  );
}

export default function App() {
  return (
    <Page>
      <Global />
      <StatusBar>
        <Label $size={39} $color={C.grey}><Fit w={98}>10:28</Fit></Label>
        <StatusIcons />
      </StatusBar>

      <TitleBar>
        <TitleLeft>
          <svg width="34" height="58" viewBox="0 0 34 58">
            <path d="M30 3L4 29L30 55" fill="none" stroke="#333" strokeWidth="4.800" strokeLinecap="round" />
          </svg>
          <Logo><span>东方</span><span>财富</span></Logo>
        </TitleLeft>
        <TitleMid>
          <NameRow>
            <Label $size={47.5} $lh={64}>幸福蓝海</Label>
            <CorpBadge>企</CorpBadge>
          </NameRow>
          <CodeRow>
            <Label $size={36} $color={C.grey}><Fit w={126}>300528</Fit></Label>
            <LevelBadge><Fit w={32}>L2</Fit></LevelBadge>
            <Caret $w={22} $h={14} $color="#c8c8c8" $ml={10} />
          </CodeRow>
        </TitleMid>
        <TitleRight>
          <Robot />
          <Gap $w={41} />
          <svg width="60" height="60" viewBox="887 109 60 60">
            <path d="M910.500 113H893a3 3 0 0 0-3 3V163a3 3 0 0 0 3 3H940a3 3 0 0 0 3-3V146.500M923 113H943V132M942 114L914.500 141.500" fill="none" stroke="#333" strokeWidth="4" strokeLinecap="round" strokeLinejoin="round" />
          </svg>
          <Gap $w={43} />
          <svg width="62" height="62" viewBox="990 108 62 62">
            <path d="M1036 153.500L1048.500 165.500" stroke="#333" strokeWidth="4.200" strokeLinecap="round" />
            <circle cx="1018.700" cy="136.500" r="25.600" fill="none" stroke="#333" strokeWidth="3.800" />
          </svg>
        </TitleRight>
      </TitleBar>

      <Quote>
        <PriceCol>
          <Price><Fit w={202}>14.27</Fit></Price>
          <ChangeRow><Fit w={132}>20.02%</Fit><Fit w={78}>2.38</Fit></ChangeRow>
          <DateRow><Fit w={224}>2025/07/24</Fit></DateRow>
        </PriceCol>
        <MetricCol $w={239}>
          <Metric $red><MetricName>今开</MetricName><Fit w={104}>12.31</Fit></Metric>
          <Metric><MetricName>换手</MetricName><Fit w={136}>13.54%</Fit></Metric>
          <Metric><MetricName>盘后量</MetricName><Fit w={42}><Dashes>--</Dashes></Fit></Metric>
        </MetricCol>
        <MetricCol $w={240} $ml={28}>
          <Metric $red><MetricName>最高</MetricName><Fit w={105}>14.27</Fit></Metric>
          <Metric><MetricName>总手</MetricName><Fit w={148}>50.46万</Fit></Metric>
          <Metric><MetricName>盘后额</MetricName><Fit w={42}><Dashes>--</Dashes></Fit></Metric>
        </MetricCol>
        <MetricCol $w={240} $ml={55}>
          <Metric $red><MetricName>最低</MetricName><Fit w={105}>12.23</Fit></Metric>
          <Metric><MetricName>金额</MetricName><Fit w={124}>6.78亿</Fit></Metric>
          <MoreBtn>更多</MoreBtn>
        </MetricCol>
      </Quote>

      <Notice>
        <svg width="54" height="44" viewBox="28 473 54 44" fill="none" stroke="#dd6a1c" strokeWidth="2.800" strokeLinejoin="round">
          <path d="M52 476V514L41 505H34a3 3 0 0 1-3-3V488a3 3 0 0 1 3-3H41Z" />
          <path d="M59.500 484.500Q69.500 486 69.500 495T59.500 505.500M61 477Q78 480 78 495T61 513" strokeLinecap="round" />
        </svg>
        <NoticeText>自选分析<Colon $by={4}>：</Colon>触发重点关注信号，立即点击查看</NoticeText>
        <svg width="30" height="30" viewBox="0 0 30 30">
          <path d="M2 2L28 28M28 2L2 28" stroke="#999" strokeWidth="2.800" />
        </svg>
      </Notice>

      <Tabs>
        <Tab $w={156}>分时</Tab>
        <Tab $w={162}>五日</Tab>
        <Tab $w={160} $on>日K<TabBar /></Tab>
        <Tab $w={158}>周K</Tab>
        <Tab $w={163}>月K</Tab>
        <Tab $w={177}><TabMore>更多<Caret $w={14} $h={12} $ml={10} /></TabMore></Tab>
        <Tab $w={84}><Gear /></Tab>
      </Tabs>

      <Toolbar>
        <Pill $w={109}>均线<Caret $w={14} $h={12} $ml={6} /></Pill>
        <Label $size={37} $ml={13}><Fit w={180}>MA5:11.91</Fit></Label>
        <Arrow color={C.ink} ml={8} />
        <Label $size={37} $ml={12} $color={C.yellow}><Fit w={142}>10:11.30</Fit></Label>
        <Arrow color={C.yellow} ml={9} />
        <Label $size={37} $ml={12} $color={C.magenta}><Fit w={144}>20:10.95</Fit></Label>
        <Arrow color={C.magenta} ml={10} />
        <Pill $w={128} $ml={56} $size={35}><Fit w={88}>DK点</Fit><Corner /></Pill>
        <Pill $w={133} $ml={39} $size={35.5}>前复权</Pill>
      </Toolbar>

      <ChartArea>
        <LeftCol>
          <KChart />
          <DateStrip>
            <Label $size={39} $color="#8a8a8a"><Fit w={178}>20250512</Fit></Label>
            <DateButton><Fit w={467}>20250724 周四 查看分时 &gt;</Fit></DateButton>
          </DateStrip>
          <SliderRow><Track><HandleGrip /><HandleGrip /></Track></SliderRow>
          <SubHead $h={62}>
            <Pill $w={151} $size={36}><Fit w={107}>成交量</Fit><Caret $w={14} $h={12} $ml={14} /></Pill>
            <Label $size={33} $ml={5}><Fit w={57}>50.46万</Fit></Label>
            <Arrow color={C.ink} w={9} h={28} ml={4} />
            <Label $size={33} $ml={7} $color={C.gold}><Fit w={96}>MA1:42.79万</Fit></Label>
            <Arrow color={C.gold} w={9} h={28} ml={4} />
            <Label $size={33} $ml={8} $color={C.violet}><Fit w={96}>MA2:42.79万</Fit></Label>
            <Arrow color={C.violet} w={9} h={28} ml={4} />
            <Label $size={33} $ml={8} $color={C.green}><Fit w={95}>MA3:20.67万</Fit></Label>
            <Arrow color={C.green} w={9} h={28} ml={5} />
            <NextBtn>
              <svg width="18" height="30" viewBox="0 0 18 30">
                <path d="M3 3L15 15L3 27" fill="none" stroke="#fff" strokeWidth="4" strokeLinecap="round" />
              </svg>
            </NextBtn>
          </SubHead>
          <VolumeChart />
          <SubHead>
            <Pill $w={151} $size={36}><Fit w={107}>竞价额</Fit><Caret $w={14} $h={12} $ml={14} /></Pill>
            <Label $size={40} $ml={5}><Fit w={135}>462.2万</Fit></Label>
            <Arrow color={C.ink} w={21} h={34} ml={10} down />
          </SubHead>
          <BidChart />
          <SubHead>
            <Pill $w={187} $size={36}><Fit w={143}>资金趋势</Fit><Caret $w={14} $h={12} $ml={14} /></Pill>
            <Label $size={39} $ml={3}><Fit w={78}>8546万</Fit></Label>
            <Arrow color={C.ink} w={14} h={34} ml={6} />
            <Label $size={39} $ml={12} $color={C.gold}><Fit w={139}>MA1:1877万</Fit></Label>
            <Arrow color={C.gold} w={14} h={34} ml={5} />
            <Label $size={39} $ml={12} $color={C.violet}><Fit w={125}>MA2:635万</Fit></Label>
            <Arrow color={C.violet} w={14} h={34} ml={5} />
          </SubHead>
          <FlowChart />
        </LeftCol>
        <RightCol>
          <CostChart />
          <Legend>
            <span><Swatch $c="#5ab748" />套牢</span>
            <span><Swatch $c="#e84848" />获利</span>
            <span><Swatch $c="#3380e0" />平均</span>
          </Legend>
          <Stats>
            <Stat name="获利比例" value="100.00%" w={115} />
            <Stat name="平均成本" value="10.72" w={75} />
            <Stat name="90%成本" value="9.10-13.42" w={149} />
            <Stat name="集中度" value="19.18%" w={98} />
          </Stats>
          <NoteRow><span>说明<Info>i</Info></span><Fit w={167}>2025-07-24</Fit></NoteRow>
        </RightCol>
        <CrossV />
        <CrossH />
        <OrderTip>
          <TipPrice>14.27</TipPrice>
          <TipRow>
            按此价下单
            <svg width="13" height="22" viewBox="0 0 13 22"><path d="M1.500 1.500L11 11L1.500 20.500" fill="none" stroke={C.grey} strokeWidth="2" /></svg>
          </TipRow>
        </OrderTip>
      </ChartArea>

      <SectionHead>
        <svg width="40" height="24" viewBox="0 0 40 24">
          <path d="M2 22L20 4L38 22" fill="none" stroke={C.orange} strokeWidth="4" />
        </svg>
        <SectionTitle>个股异动</SectionTitle>
        <SeeAll>查看全部</SeeAll>
        <svg width="22" height="36" viewBox="0 0 22 36">
          <path d="M2 1.500L19 18L2 34.500" fill="none" stroke="#c8c8c8" strokeWidth="3.200" />
        </svg>
      </SectionHead>

      <Dock>
        <IndexCell>
          <UpMark />
          <Label $size={40} $color={C.green} $lh={46}><Fit w={141}>3594.45</Fit></Label>
          <IndexRow>
            <Label $size={35.5} $color={C.grey} $lh={46}>上证</Label>
            <Label $size={37} $color={C.green} $lh={46} $ml={43}><Fit w={118}>-0.10%</Fit></Label>
          </IndexRow>
        </IndexCell>
        <DockItem><TradeIcon />交易</DockItem>
        <DockItem><PostIcon />发帖</DockItem>
        <DockItem><GridIcon />功能</DockItem>
        <DockItem><DotsIcon />设自选</DockItem>
      </Dock>

      <NavBar>
        <svg width="46" height="54" viewBox="0 0 46 54">
          <path d="M39 4.500V49.500L2.500 27Z" fill="none" stroke="#888" strokeWidth="4.500" strokeLinejoin="round" />
        </svg>
        <svg width="52" height="54" viewBox="0 0 52 54">
          <circle cx="27" cy="27" r="22.800" fill="none" stroke="#888" strokeWidth="4.500" />
        </svg>
        <svg width="50" height="54" viewBox="0 0 50 54">
          <rect x="4.500" y="6" width="41" height="41" rx="2" fill="none" stroke="#888" strokeWidth="4.500" />
        </svg>
      </NavBar>
    </Page>
  );
}
